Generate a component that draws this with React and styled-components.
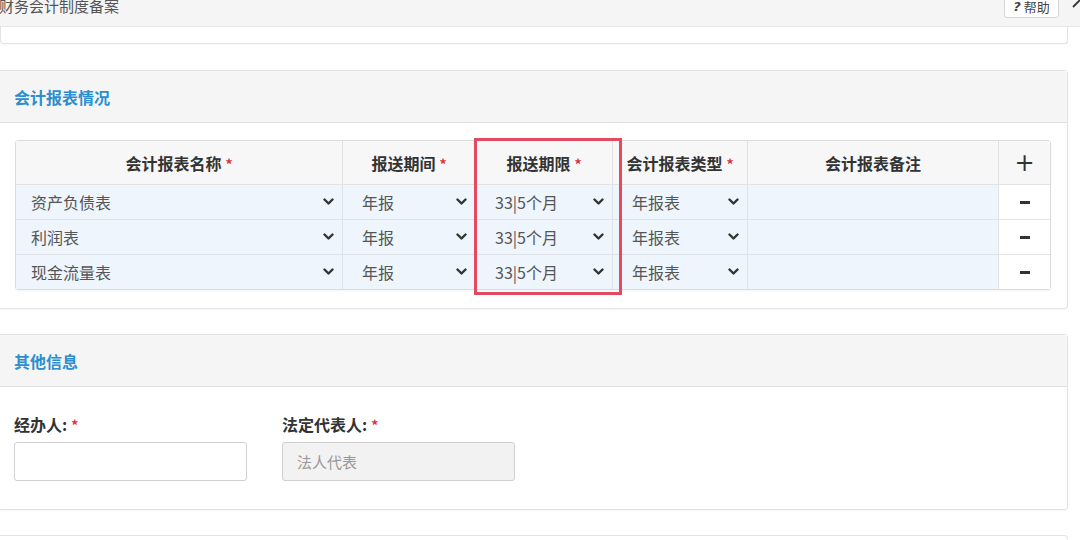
import styled, { createGlobalStyle } from 'styled-components'

const GlobalStyle = createGlobalStyle`
    html, body {
        margin: 0;
        padding: 0;
        background: #fff;
        font-family: "Noto Sans CJK SC", "Noto Sans", "Liberation Sans", sans-serif;
    }
`;

const columns = [
    { title: '会计报表名称', width: 327, required: true },
    { title: '报送期间', width: 133, required: true },
    { title: '报送期限', width: 137, required: true },
    { title: '会计报表类型', width: 135, required: true },
    { title: '会计报表备注', width: 251, required: false },
]

const rows = [
    ['资产负债表', '年报', '33|5个月', '年报表'],
    ['利润表', '年报', '33|5个月', '年报表'],
    ['现金流量表', '年报', '33|5个月', '年报表'],
]

const Chevron = () => (
    <svg width="11" height="8" viewBox="0 0 11 8">
        <path d="M1.5 1.5 L5.5 5.5 L9.5 1.5" fill="none" stroke="#333" strokeWidth="2.4" strokeLinecap="round" strokeLinejoin="round" />
    </svg>
)

const App = () => {
    return (
        <Page>
            <GlobalStyle />
            <TopBar>
                <PageTitle>财务会计制度备案</PageTitle>
                <TopActions>
                    <HelpButton><HelpMark>?</HelpMark>帮助</HelpButton>
                    <svg width="12" height="12" viewBox="0 0 12 12">
                        <path d="M2 10 L10 2 M4.5 2 H10 V7.5" fill="none" stroke="#333" strokeWidth="1.8" />
                    </svg>
                </TopActions>
            </TopBar>

            <PanelTail />

            <Panel>
                <PanelHeader>会计报表情况</PanelHeader>
                <TableBody>
                    <TableWrap>
                        <Table>
                            <colgroup>
                                {columns.map((c) => <col key={c.title} style={{ width: c.width }} />)}
                                <col style={{ width: 51 }} />
                            </colgroup>
                            <thead>
                                <tr>
                                    {columns.map((c) => (
                                        <Th key={c.title}>
                                            {c.title}{c.required && <Star>*</Star>}
                                        </Th>
                                    ))}
                                    <Th><PlusSign>+</PlusSign></Th>
                                </tr>
                            </thead>
                            <tbody>
                                {rows.map((r, i) => (
                                    <tr key={i}>
                                        {r.map((v, j) => (
                                            <Td key={j}>
                                                <SelectBox $first={j === 0}>
                                                    <span>{v}</span>
                                                    <Chevron />
                                                </SelectBox>
                                            </Td>
                                        ))}
                                        <Td />
                                        <ActionTd><MinusSign /></ActionTd>
                                    </tr>
                                ))}
                            </tbody>
                        </Table>
                        <Highlight />
                    </TableWrap>
                </TableBody>
            </Panel>

            <Panel>
                <PanelHeader>其他信息</PanelHeader>
                <FormBody>
                    <Field>
                        <Label>经办人:<Star>*</Star></Label>
                        <Input />
                    </Field>
                    <Field>
                        <Label>法定代表人:<Star>*</Star></Label>
                        <Input disabled placeholder="法人代表" />
                    </Field>
                </FormBody>
            </Panel>

            <PanelHead />
        </Page>
    )
}

export default App


// STYLED COMPONENTS
const Page = styled.div`
    height: 550px;
    margin-top: -10px;
    overflow: hidden;
`;

const TopBar = styled.div`
    height: 37px;
    background: #f5f5f5;
    border-bottom: 1px solid #e6e6e6;
    display: flex;
    align-items: center;
    justify-content: space-between;
    box-sizing: border-box;
`;

const PageTitle = styled.div`
    font-size: 15px;
    color: #555;
    margin-top: -5px;
    margin-left: -1px;
`;

const TopActions = styled.div`
    display: flex;
    align-items: center;
    gap: 12px;
    margin-right: -3px;
    margin-top: -10px;
`;

const HelpButton = styled.div`
    height: 23px;
    width: 55px;
    box-sizing: border-box;
    border: 1px solid #d6d6d6;
    border-radius: 3px;
    background: #fff;
    font-size: 13px;
    color: #444;
    display: flex;
    align-items: center;
    justify-content: center;
    gap: 3px;
    margin-top: 6px;
`;

const HelpMark = styled.span`
    font-weight: 700;
    font-style: italic;
    font-family: "DejaVu Sans", sans-serif;
    font-size: 13px;
`;

const PanelTail = styled.div`
    width: 1068px;
    height: 17px;
    box-sizing: border-box;
    border: 1px solid #e3e3e3;
    border-top: none;
    border-radius: 0 0 4px 4px;
    box-shadow: 0 1px 2px rgba(0,0,0,.04);
    margin-bottom: 26px;
`;

const Panel = styled.section`
    width: 1068px;
    box-sizing: border-box;
    border: 1px solid #e3e3e3;
    border-left: none;
    border-radius: 0 4px 4px 0;
    box-shadow: 0 1px 2px rgba(0,0,0,.04);
    margin-bottom: 25px;
    background: #fff;
`;

const PanelHead = styled(Panel)`
    height: 30px;
    border-bottom: none;
    border-radius: 0 4px 0 0;
`;

const PanelHeader = styled.div`
    height: 51px;
    background: #f5f5f5;
    border-bottom: 1px solid #dedede;
    display: flex;
    align-items: center;
    padding-left: 14px;
    font-size: 16px;
    font-weight: 700;
    color: #2b8fcf;
`;

const TableBody = styled.div`
    padding: 17px 18px 18px 15px;
`;

const TableWrap = styled.div`
    position: relative;
`;

const Table = styled.table`
    width: 1034px;
    table-layout: fixed;
    border-collapse: separate;
    border-spacing: 0;
    border: 1px solid #dcdcdc;
    border-radius: 3px;
    box-shadow: 0 1px 2px rgba(0,0,0,.05);
`;

const Th = styled.th`
    height: 43px;
    background: #f7f7f7;
    border-right: 1px solid #e2e2e2;
    border-bottom: 1px solid #e2e2e2;
    font-size: 16px;
    font-weight: 700;
    color: #333;
    text-align: center;
    padding: 0;
    white-space: nowrap;
    &:last-child {
        border-right: none;
    }
`;

const Td = styled.td`
    height: 34px;
    background: #eef5fd;
    border-right: 1px solid #dfe3e8;
    border-bottom: 1px solid #dfe3e8;
    padding: 0;
    tr:last-child & {
        border-bottom: none;
    }
`;

const ActionTd = styled(Td)`
    background: #fff;
    border-right: none;
    text-align: center;
`;

const SelectBox = styled.div`
    display: flex;
    align-items: center;
    justify-content: space-between;
    padding: 0 8px 0 ${(p) => (p.$first ? '15px' : '19px')};
    font-size: 16px;
    color: #555;
    span {
        margin-top: -1px;
    }
`;

const Star = styled.span`
    color: #e0303a;
    font-weight: 700;
    font-size: 14px;
    margin-left: 4px;
`;

const PlusSign = styled.span`
    font-size: 24px;
    font-weight: 400;
    color: #333;
    font-family: "DejaVu Sans", sans-serif;
`;

const MinusSign = styled.div`
    width: 10px;
    height: 3px;
    background: #333;
    margin: 0 auto;
`;

const Highlight = styled.div`
    position: absolute;
    left: 459px;
    top: -2px;
    width: 148px;
    height: 157px;
    box-sizing: border-box;
    border: 3px solid #e24a60;
    pointer-events: none;
`;

const FormBody = styled.div`
    display: flex;
    gap: 35px;
    padding: 28px 14px 28px 14px;
`;

const Field = styled.div`
    display: flex;
    flex-direction: column;
    gap: 8px;
`;

const Label = styled.div`
    font-size: 16px;
    font-weight: 700;
    color: #333;
    line-height: 18px;
`;

const Input = styled.input`
    width: 233px;
    height: 39px;
    box-sizing: border-box;
    border: 1px solid #d0d0d0;
    border-radius: 3px;
    padding: 0 14px;
    font-size: 15px;
    font-family: inherit;
    background: #fff;
    &:disabled {
        background: #f2f2f2;
    }
    &::placeholder {
        color: #999;
    }
`;
